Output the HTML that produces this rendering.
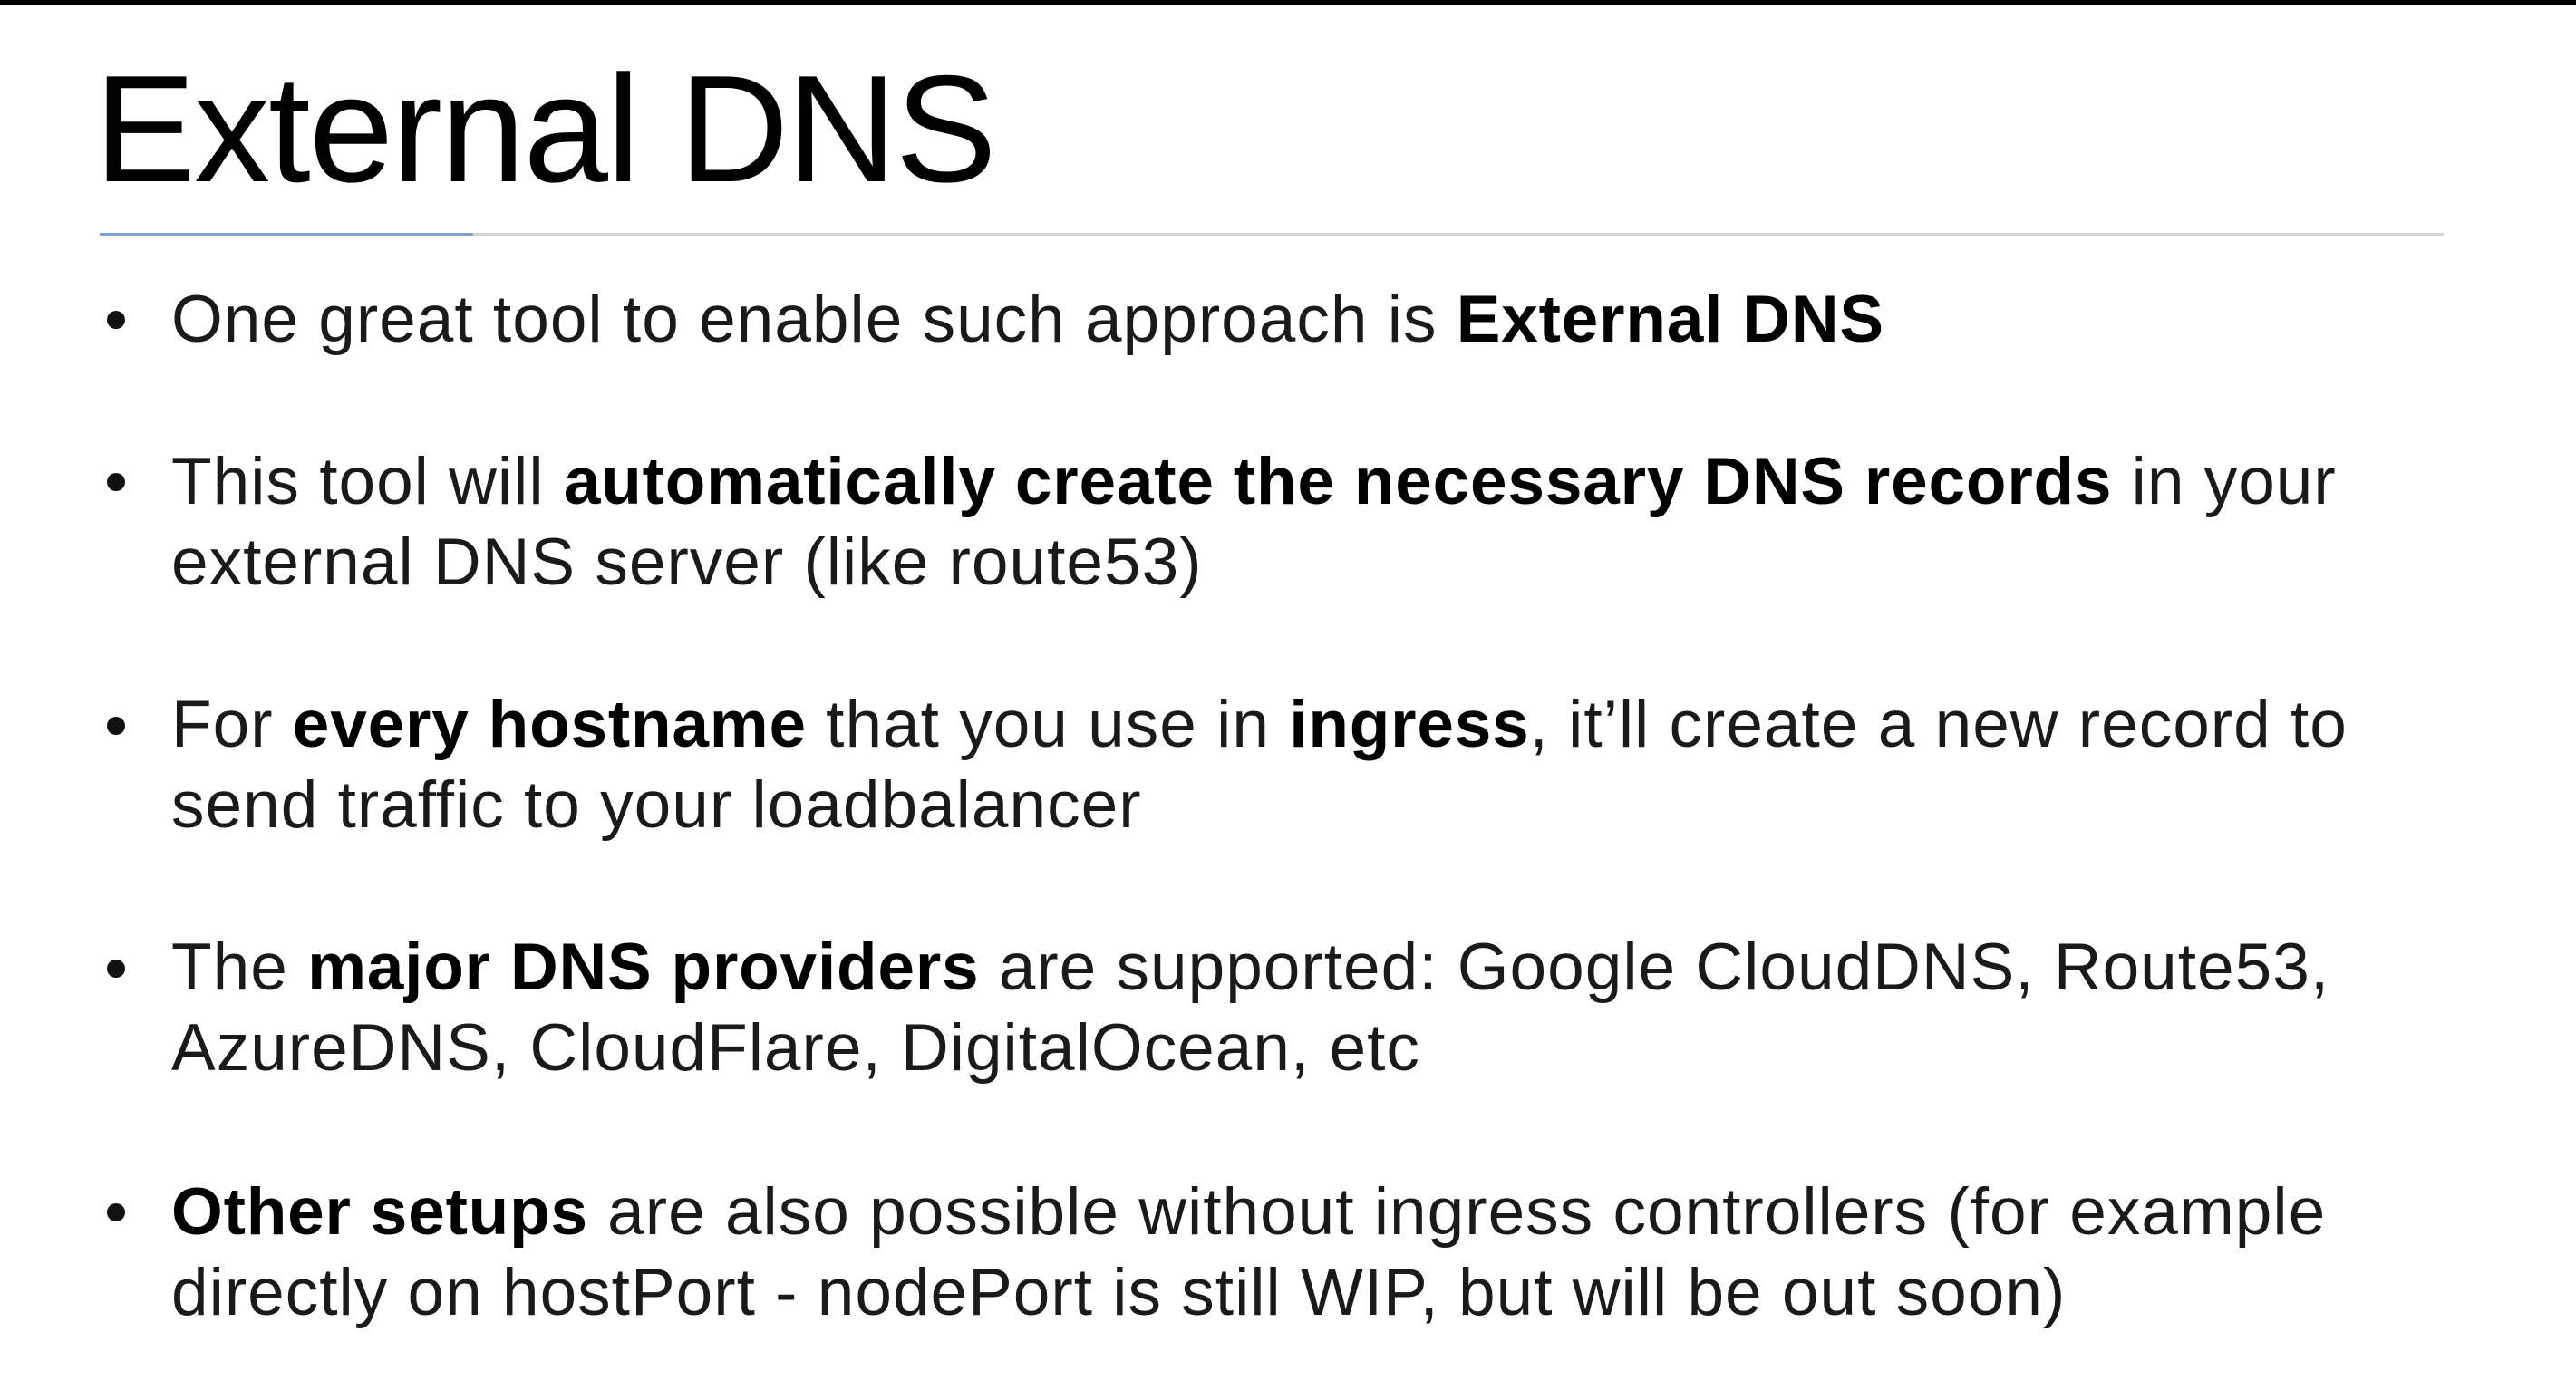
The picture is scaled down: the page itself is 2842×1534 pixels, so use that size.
<!DOCTYPE html>
<html><head><meta charset="utf-8"><style>
html,body{margin:0;padding:0;background:#fff;}
body{width:2842px;height:1534px;position:relative;overflow:hidden;font-family:"Liberation Sans",Arial,sans-serif;color:#111;}
.bar{position:absolute;left:0;top:0;width:2842px;height:6px;background:#000;}
.title{position:absolute;left:104px;top:58px;font-size:168px;line-height:168px;letter-spacing:-2px;white-space:nowrap;color:#000;}
.rule{position:absolute;left:110px;top:257px;width:2586px;height:3px;background:#d4d4d4;}
.rule2{position:absolute;left:110px;top:257px;width:412px;height:3px;background:#7fa3d6;}
.l{position:absolute;left:189px;font-size:73px;line-height:73px;white-space:nowrap;letter-spacing:1px;color:#1a1a1a;}
.l b{font-weight:bold;letter-spacing:0.8px;color:#000;}
.d{position:absolute;left:118px;width:20px;height:20px;border-radius:50%;background:#111;}
</style></head><body>
<div class="bar"></div>
<div class="title">External DNS</div>
<div class="rule"></div><div class="rule2"></div>

<div class="d" style="top:343px"></div>
<div class="l" style="top:316px">One great tool to enable such approach is <b>External DNS</b></div>

<div class="d" style="top:522px"></div>
<div class="l" style="top:495px">This tool will <b>automatically create the necessary DNS records</b> in your</div>
<div class="l" style="top:584px">external DNS server (like route53)</div>

<div class="d" style="top:791px"></div>
<div class="l" style="top:763px">For <b>every hostname</b> that you use in <b>ingress</b>, it’ll create a new record to</div>
<div class="l" style="top:852px">send traffic to your loadbalancer</div>

<div class="d" style="top:1059px"></div>
<div class="l" style="top:1031px">The <b>major DNS providers</b> are supported: Google CloudDNS, Route53,</div>
<div class="l" style="top:1120px">AzureDNS, CloudFlare, DigitalOcean, etc</div>

<div class="d" style="top:1328px"></div>
<div class="l" style="top:1301px"><b>Other setups</b> are also possible without ingress controllers (for example</div>
<div class="l" style="top:1390px">directly on hostPort - nodePort is still WIP, but will be out soon)</div>
</body></html>
